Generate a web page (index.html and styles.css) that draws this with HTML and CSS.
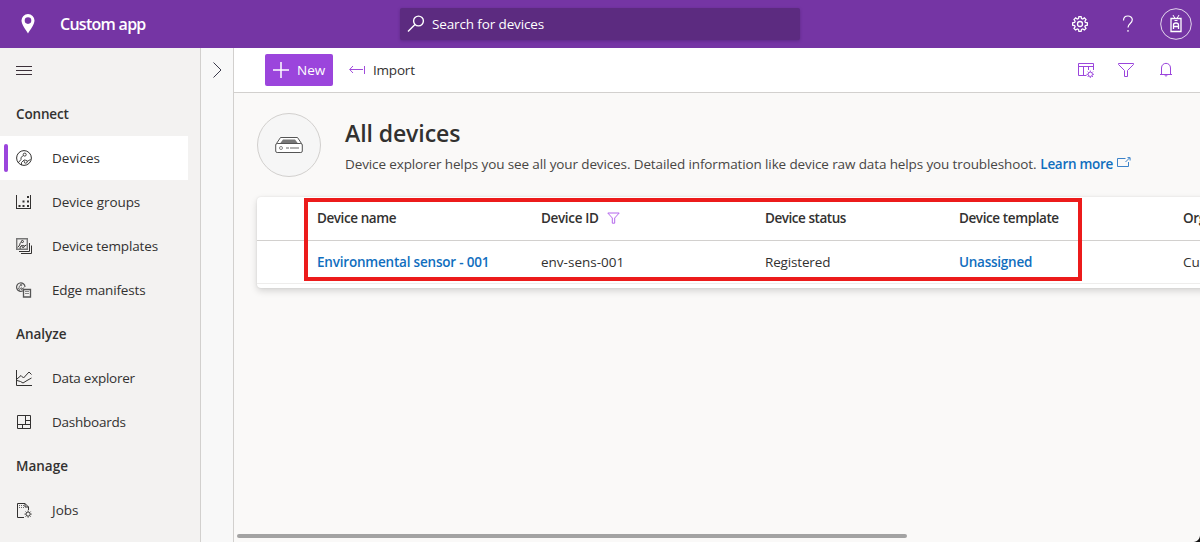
FILE: index.html
```html
<!DOCTYPE html>
<html lang="en">
<head>
<meta charset="utf-8">
<title>Custom app</title>
<link rel="stylesheet" href="styles.css">
</head>
<body>
<svg class="defs" width="0" height="0" aria-hidden="true">
  <defs>
    <path id="gear" d="M6.9 .6h2.2l.4 2 1.2.5 1.7-1.2 1.6 1.6-1.1 1.7.5 1.2 2 .4v2.3l-2 .4-.5 1.2 1.1 1.7-1.6 1.6-1.7-1.1-1.2.5-.4 2H6.900l-.4-2-1.2-.5L3.600 14 2 12.400l1.100-1.700-.5-1.200-2-.4V6.800l2-.4.5-1.200L2 3.500l1.600-1.600 1.700 1.200 1.200-.5z"/>
    <g id="minigear"><circle cx="4" cy="4" r="2.300"/><path d="M4 0v1.500M4 6.500V8M0 4h1.500M6.500 4H8M1.200 1.200l1.100 1.100M5.700 5.700l1.100 1.100M6.800 1.200 5.700 2.300M2.300 5.700 1.200 6.800"/></g>
    <g id="circuit"><path d="M2 13 5 9.500V7.500l2.300-2M5.500 15v-2.500l3-3M11 11.500l3.500-2"/><circle cx="8.700" cy="4.600" r="1.500"/><circle cx="9.700" cy="11.700" r="1.500"/></g>
  </defs>
</svg>
<div class="app">
  <header class="topbar">
    <svg class="pin" width="14" height="20" viewBox="0 0 14 20"><path fill="#fff" fill-rule="evenodd" d="M7 0a6.500 6.500 0 0 1 6.500 6.500C13.500 10.500 9 16 7 19.500 5 16 .5 10.500.5 6.500A6.500 6.500 0 0 1 7 0zm0 3.300a3.300 3.300 0 1 0 0 6.600 3.300 3.300 0 0 0 0-6.600z"/></svg>
    <div class="brand"><span class="t-brand">Custom app</span></div>
    <div class="search">
      <svg width="18" height="18" viewBox="0 0 18 18" fill="none" stroke="#fff" stroke-width="1.400"><circle cx="11.500" cy="6" r="4.900"/><path d="M8 9.500 1 16.500"/></svg>
      <span class="t-search">Search for devices</span>
    </div>
    <div class="actions">
      <svg width="16" height="16" viewBox="0 0 16 16" fill="none" stroke="#fff" stroke-width="1.300"><use href="#gear"/><circle cx="8" cy="8" r="2.500"/></svg>
      <svg class="help" width="12" height="18" viewBox="0 0 12 18" fill="none" stroke="#fff" stroke-width="1.200"><path d="M1.500 5.500C1.500-.5 10.300-.2 10.300 4.800c0 3.700-4.300 3.600-4.300 7.700M6 15v1.800"/></svg>
      <svg class="avatar" width="32" height="32" viewBox="0 0 32 32" fill="none" stroke="#fff"><circle cx="16" cy="16" r="15.300" stroke-opacity=".8"/><path d="M11 10.500h10v13H11z" stroke-width="1.300"/><path d="m13 7 2 3.500M19 7l-2 3.500M14.500 12.500h3"/><path stroke-width="1.300" d="M13.500 21v-4q0-2 2.500-2t2.500 2v4M13.500 18.500h5"/></svg>
    </div>
  </header>
  <div class="body">
    <nav class="sidebar">
      <div class="burger"><svg width="16" height="10" viewBox="0 0 16 10" stroke="#3b3039"><path d="M0 .5h16M0 4.500h16M0 8.500h16"/></svg></div>
      <div class="group"><span class="t-connect">Connect</span></div>
      <a class="item active"><svg width="16" height="16" viewBox="0 0 16 16" fill="none" stroke="#323130"><circle cx="8" cy="8" r="7.400"/><use href="#circuit" stroke-width=".9"/></svg><span class="t-devices">Devices</span></a>
      <a class="item"><svg width="16" height="16" viewBox="0 0 16 16" fill="#323130"><path d="M0 1h1v13h13V1h1v14H0z"/><path d="M2.500 11h2v2h-2zM6.500 11h2v2h-2zM11 11h2v2h-2zM6.500 6.500h2v2h-2zM11 6.500h2v2h-2zM11 2h2v2h-2z"/></svg><span class="t-groups">Device groups</span></a>
      <a class="item"><svg width="16" height="16" viewBox="0 0 16 16" fill="none" stroke="#323130"><path stroke="#777" d="M.7.700h10.600v10.600H.7z" stroke-width="1.400"/><g transform="translate(.3 .3) scale(.7)"><use href="#circuit" stroke-width="1.400"/></g><path d="M3 13.500h10.500V5M5 15.500h10.500V7.500"/></svg><span class="t-templates">Device templates</span></a>
      <a class="item"><svg width="16" height="16" viewBox="0 0 16 16" fill="none" stroke="#555"><path d="M7 8.700A4.200 4.200 0 1 1 9 5" stroke-width="1.200"/><g transform="translate(.4 .5) scale(.54)"><use href="#circuit" stroke-width="1.700"/></g><path d="M7.500 7.500h7v7.500h-7z" stroke-width="1.300"/><path d="M9 9.500h4M9 11.500h4" stroke="#888"/></svg><span class="t-edge">Edge manifests</span></a>
      <div class="group"><span class="t-analyze">Analyze</span></div>
      <a class="item"><svg width="16" height="16" viewBox="0 0 16 16" fill="none" stroke="#323130"><path d="M.5 0v15.500H16M1 9l4-3.500L7.500 8 13 2l2.500 2.500M1 10.500l3.500 1L7 13l4-2.500L15.500 8"/></svg><span class="t-explorer">Data explorer</span></a>
      <a class="item"><svg width="16" height="16" viewBox="0 0 16 16" fill="none" stroke="#323130"><path d="M1.500 1.500h13v13h-13zM9.500 1.500v9M1.500 10.500h13M9.500 6.500h5M6.500 10.500v4"/></svg><span class="t-dash">Dashboards</span></a>
      <div class="group"><span class="t-manage">Manage</span></div>
      <a class="item"><svg width="16" height="16" viewBox="0 0 16 16" fill="none" stroke="#323130"><path d="M8 15.500H1.500v-14H9l3.500 3.500v3M9 1.500V5h3.500"/><path stroke="#666" stroke-dasharray="1 1" d="M3 3.500h5M3 5.500h5"/><g transform="translate(8.500 8.500) scale(.9)"><use href="#minigear"/></g></svg><span class="t-jobs">Jobs</span></a>
    </nav>
    <aside class="expander"><svg width="9" height="16" viewBox="0 0 9 16" fill="none" stroke="#3b3a4a"><path d="m.5.500 7.500 7.500-7.500 7.500"/></svg></aside>
    <main class="main">
      <div class="toolbar">
        <button class="new"><svg width="16" height="16" viewBox="0 0 16 16" stroke="#fff" stroke-width="1.500"><path d="M8 0v16M0 8h16"/></svg><span class="t-new">New</span></button>
        <button class="import"><svg width="16" height="8" viewBox="0 0 16 8" fill="none" stroke="#a04bdb"><path d="M15.500 0v8M.8 3.500H14M4 0 .700 3.500 4 7"/></svg><span class="t-import">Import</span></button>
        <div class="tools">
          <svg width="16" height="16" viewBox="0 0 16 16" fill="none" stroke="#9b45dc"><path d="M8.500 13.500h-8v-12h15V8M.5 4.500h15M5.500 4.500v9M10.500 4.500V8"/><g transform="translate(8.500 8.500) scale(.95)"><use href="#minigear"/></g></svg>
          <svg width="16" height="16" viewBox="0 0 16 16" fill="none" stroke="#9b45dc"><path d="M.5 1.500h15v1L9.500 8.500v6h-3v-6l-6-6z"/></svg>
          <svg width="16" height="16" viewBox="0 0 16 16" fill="none" stroke="#9b45dc"><path d="M2 12.500h12M3.500 12.500V6C3.500-.2 12.500-.2 12.500 6v6.500M6.500 13q1.500 2.500 3 0"/></svg>
        </div>
      </div>
      <section class="hero">
        <div class="disc"><svg width="28" height="18" viewBox="0 0 28 18"><path d="M5.500 1.500h17l4 6v8q0 1-1 1h-23q-1 0-1-1v-8z" fill="#fff"/><path d="M8 3.500h12l3 4H5z" fill="#777"/><g fill="none" stroke="#555"><path d="m1.500 7.500 4-6h17l4 6"/><rect x=".7" y="7.500" width="26.600" height="9" rx="1.500"/><circle cx="6" cy="12" r="1.500" stroke="#888"/><path stroke="#999" stroke-width="1.300" d="M11 12h3M15 12h9"/></g></svg></div>
        <div class="intro">
          <h1><span class="t-title">All devices</span></h1>
          <p><span class="t-desc">Device explorer helps you see all your devices. Detailed information like device raw data helps you troubleshoot.</span><a class="learn"><span class="t-learn">Learn more</span><svg width="14" height="11" viewBox="0 0 14 11" fill="none" stroke="#3b82c9"><path d="M8.500 1.500h-8v8h11V5M8.500 5l4-4M10.500.6h2.600V3.500"/></svg></a></p>
        </div>
      </section>
      <div class="card">
        <div class="row head">
          <span><b class="t-hname">Device name</b></span>
          <span><b class="t-hid">Device ID</b><svg class="hfilter" width="13" height="12" viewBox="0 0 13 12" fill="none" stroke="#b467ec"><path d="M.8 1h11.400L7.700 6v5.200H5.300V6z"/></svg></span>
          <span><b class="t-hstatus">Device status</b></span>
          <span><b class="t-htemplate">Device template</b></span>
          <span><b class="t-horg">Organization</b></span>
        </div>
        <div class="row">
          <span class="link"><b class="t-sensor">Environmental sensor - 001</b></span>
          <span><i class="t-env">env-sens-001</i></span>
          <span><i class="t-reg">Registered</i></span>
          <span class="link"><b class="t-un">Unassigned</b></span>
          <span><i class="t-cu">Custom app</i></span>
        </div>
        <div class="highlight"></div>
      </div>
      <div class="hscroll"></div>
      <div class="corner"></div>
    </main>
  </div>
</div>
</body>
</html>
```
FILE: styles.css
```css
* { box-sizing: border-box; }
body { margin: 0; font: 13.5px/20px "Open Sans", "Noto Sans", sans-serif; color: #323130; overflow: hidden; }
.defs { position: absolute; }
svg { display: block; flex: none; }
button { font: inherit; color: inherit; border: 0; background: none; padding: 0; }
span, b, i { white-space: nowrap; }
i { font-style: normal; }
b { font-weight: 600; }

.app { display: flex; flex-direction: column; width: 1200px; height: 542px; overflow: hidden; background: #faf9f8; }
.topbar { height: 48px; flex: none; display: flex; align-items: center; background: #7535a4; color: #fff; padding-left: 21px; }
.brand { width: 340px; margin-left: 25px; font-size: 16px; font-weight: 600; }
.search { width: 400px; height: 32px; display: flex; align-items: center; gap: 7px; padding-left: 7px; background: #5c2b80; border-radius: 2px; box-shadow: 0 1px 3px rgba(50, 20, 80, .35); }
.actions { margin-left: auto; display: flex; align-items: center; padding-right: 8px; }
.help { margin-left: 34px; }
.avatar { margin-left: 26px; }

.body { display: flex; flex: 1; min-height: 0; }
.sidebar { width: 201px; flex: none; background: #f3f2f1; border-right: 1px solid #d2d0ce; }
.burger { height: 44px; padding: 18px 0 0 16px; }
.group { height: 44px; display: flex; align-items: center; padding-left: 16px; font-weight: 600; }
.item { height: 44px; width: 188px; display: flex; align-items: center; gap: 20px; padding-left: 16px; }
.item.active { background: #fff; padding-left: 4px; }
.item.active::before { content: ""; width: 4px; height: 28px; border-radius: 2px; background: #9b45dc; margin-right: -12px; }
.expander { width: 33px; flex: none; background: #f8f8f8; border-right: 1px solid #d2d0ce; padding: 14px 0 0 12px; }

.main { flex: 1; min-width: 0; display: flex; flex-direction: column; position: relative; }
.toolbar { height: 45px; flex: none; display: flex; align-items: center; padding: 0 26px 0 31px; background: #fff; border-bottom: 1px solid #d2d0ce; }
.new { width: 68px; height: 32px; display: flex; align-items: center; gap: 8px; padding-left: 8px; background: #9b45dc; color: #fff; border-radius: 2px; font-weight: 500; }
.import { display: flex; align-items: center; gap: 8px; margin-left: 16px; }
.tools { margin-left: auto; display: flex; gap: 24px; }

.hero { display: flex; gap: 24px; padding: 20px 0 0 23px; height: 104px; flex: none; }
.disc { width: 64px; height: 64px; border: 1px solid #d2d0ce; border-radius: 50%; background: #f6f6f6; display: flex; align-items: center; justify-content: center; }
h1 { margin: 5px 0 0; font-size: 23px; line-height: 30px; font-weight: 600; }
p { margin: 6px 0 0; display: flex; color: #484644; }
.learn { display: flex; gap: 4px; margin-left: 4px; color: #106ebe; font-weight: 600; }
.learn svg { margin-top: 3px; }

.card { position: relative; width: 1100px; height: 91px; flex: none; margin-left: 23px; background: #fff; border-radius: 4px; box-shadow: 0 3px 7px rgba(0, 0, 0, .15), 0 0 2px rgba(0, 0, 0, .1); }
.row { display: grid; grid-template-columns: 224px 224px 194px 224px 150px; padding-left: 60px; height: 43px; align-items: center; border-bottom: 1px solid #eeedec; }
.row.head { height: 44px; padding-bottom: 1px; border-color: #d2d0ce; }
.row > span { display: flex; align-items: center; }
.hfilter { margin-left: 8px; }
.link { color: #106ebe; }
.highlight { position: absolute; left: 47px; top: 1px; width: 778px; height: 83px; border: 4px solid #ec1b1b; }
.hscroll { margin: auto 0 4px 3px; width: 670px; height: 4px; border-radius: 2px; background: #a3a3a3; }
.corner { position: absolute; right: 0; bottom: 0; width: 7px; height: 7px; background: radial-gradient(circle at 0 0, transparent 6.500px, #111 7.500px); }

/* tracking */
.t-brand { letter-spacing: -.72px; }
.t-search { letter-spacing: -.13px; }
.t-connect { letter-spacing: -.15px; }
.t-groups { letter-spacing: -.06px; }
.t-templates { letter-spacing: -.12px; }
.t-edge { letter-spacing: -.16px; }
.t-explorer { letter-spacing: -.26px; }
.t-dash { letter-spacing: -.24px; }
.t-import { letter-spacing: -.2px; }
.t-title { letter-spacing: -.08px; }
.t-desc { letter-spacing: -.119px; }
.t-learn { letter-spacing: -.3px; }
.t-hname { letter-spacing: -.42px; }
.t-hid { letter-spacing: -.34px; }
.t-hstatus { letter-spacing: -.46px; }
.t-htemplate, .t-horg { letter-spacing: -.4px; }
.t-sensor { letter-spacing: -.2px; }
.t-reg { letter-spacing: -.16px; }
.t-un { letter-spacing: -.25px; }
```
